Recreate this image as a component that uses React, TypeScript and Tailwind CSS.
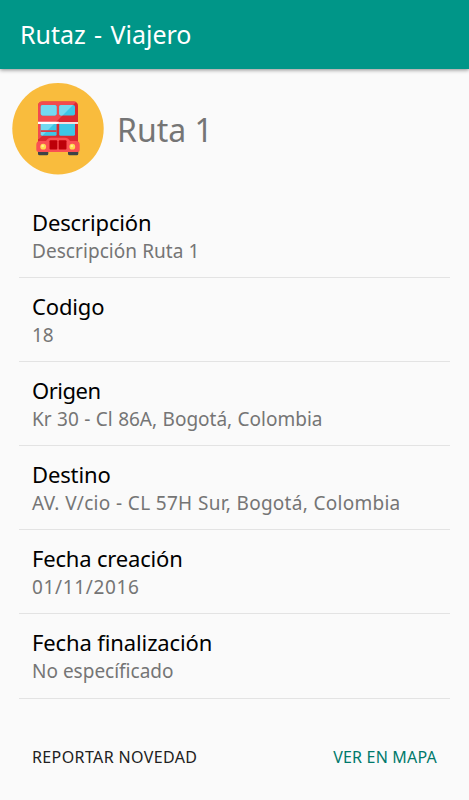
type Detail = { label: string; value: string; labelClass: string; valueClass: string };

const details: Detail[] = [
  { label: 'Descripción', value: 'Descripción Ruta 1', labelClass: 'tracking-[-0.14px]', valueClass: 'tracking-[0.06px]' },
  { label: 'Codigo', value: '18', labelClass: 'tracking-[-0.16px]', valueClass: 'tracking-[0px]' },
  { label: 'Origen', value: 'Kr 30 - Cl 86A, Bogotá, Colombia', labelClass: 'tracking-[-0.5px]', valueClass: '[word-spacing:0.5px]' },
  { label: 'Destino', value: 'AV. V/cio - CL 57H Sur, Bogotá, Colombia', labelClass: 'tracking-[-0.14px]', valueClass: 'tracking-[0.26px] [word-spacing:0.3px]' },
  { label: 'Fecha creación', value: '01/11/2016', labelClass: 'tracking-[-0.18px]', valueClass: 'tracking-[0.65px]' },
  { label: 'Fecha finalización', value: 'No específicado', labelClass: 'tracking-[-0.12px]', valueClass: 'tracking-[0px]' },
];

function BusIcon() {
  return (
    <svg viewBox="0 0 92 92" className="h-[92px] w-[92px] shrink-0" aria-hidden="true">
      <defs>
        <clipPath id="shine">
          <path d="M18 10H73L27 56H18Z" />
        </clipPath>
      </defs>
      <circle cx="46" cy="45.700" r="45.700" fill="#f9bc3d" />
      <rect x="26" y="67" width="10.300" height="5.300" rx="1.600" fill="#3e4347" />
      <rect x="56" y="67" width="10.300" height="5.300" rx="1.600" fill="#3e4347" />
      <path d="M30.500 18.500H61.500Q66 18.500 66 23V60H26V23Q26 18.500 30.500 18.500Z" fill="#dc2830" />
      <path d="M30.500 18.500H61.500Q66 18.500 66 23V60H26V23Q26 18.500 30.500 18.500Z" fill="#f24a4f" clipPath="url(#shine)" />
      <g fill="#3ec6e6">
        <rect x="28.800" y="22" width="15.800" height="10.600" rx="1.800" />
        <rect x="47.200" y="22" width="15.800" height="10.600" rx="1.800" />
        <path d="M28.800 41H44.600V51.200Q44.600 52.700 43.100 52.700H30.300Q28.800 52.700 28.800 51.200Z" />
        <path d="M47.200 41H63V51.200Q63 52.700 61.500 52.700H48.700Q47.200 52.700 47.200 51.200Z" />
      </g>
      <g fill="#75d9f0" clipPath="url(#shine)">
        <rect x="28.800" y="22" width="15.800" height="10.600" rx="1.800" />
        <rect x="47.200" y="22" width="15.800" height="10.600" rx="1.800" />
        <path d="M28.800 41H44.600V52.700H30.300L28.800 51.200Z" />
      </g>
      <path d="M28.800 47.200H44.600V49H28.800Z" fill="#d93c45" />
      <path d="M26 39H66V41H26Z" fill="#f3dfe0" />
      <path d="M26 38.800H47L45 41H26Z" fill="#fff" />
      <path d="M28 58H34Q36 54.700 39 54.700H53Q56 54.700 58 58H64Q67.700 58 67.700 62V66.500Q67.700 69 65.200 69H26.800Q24.300 69 24.300 66.500V62Q24.300 58 28 58Z" fill="#fa5053" />
      <rect x="37.500" y="57.200" width="7.800" height="9.300" rx="1" fill="#bd0008" />
      <rect x="46.700" y="57.200" width="7.800" height="9.300" rx="1" fill="#bd0008" />
      <circle cx="31.200" cy="63.700" r="2.900" fill="#ffd94f" />
      <circle cx="60.300" cy="63.700" r="2.900" fill="#ffd94f" />
      <circle cx="30.700" cy="63" r="1.300" fill="#ffec91" />
      <circle cx="59.800" cy="63" r="1.300" fill="#ffec91" />
    </svg>
  );
}

export default function App() {
  return (
    <div className="flex h-[800px] w-full flex-col overflow-hidden bg-[#fafafa] font-['Noto_Sans',sans-serif]">
      <header className="z-10 flex h-[69px] shrink-0 items-center bg-[#009688] pb-0.5 pl-5 shadow-[0_1px_4px_rgba(0,0,0,0.45)]">
        <h1 className="text-[25px] leading-[34px] text-white [word-spacing:1.8px]">Rutaz - Viajero</h1>
      </header>
      <section className="flex h-[124.500px] shrink-0 items-start pt-[14px] pl-3">
        <BusIcon />
        <h2 className="mt-[25px] ml-[13px] text-[32px] leading-[44px] text-[#757575]">Ruta 1</h2>
      </section>
      <dl className="mr-[19px] ml-[19px]">
        {details.map((item) => (
          <div key={item.label} className="flex h-[84.200px] flex-col border-b border-[#e3e3e3] pt-[14px] pl-[13px] whitespace-nowrap">
            <dt className="text-[22px] leading-[28px] text-black">
              <span className={item.labelClass}>{item.label}</span>
            </dt>
            <dd className="mt-px text-[19px] leading-[29px] text-[#757575]">
              <span className={item.valueClass}>{item.value}</span>
            </dd>
          </div>
        ))}
      </dl>
      <footer className="mt-[46px] flex justify-between pr-8 pl-8 text-[16px] leading-[24px]">
        <button className="tracking-[0.38px] text-[#212121]">REPORTAR NOVEDAD</button>
        <button className="tracking-[0.2px] text-[#00796b]">VER EN MAPA</button>
      </footer>
    </div>
  );
}
